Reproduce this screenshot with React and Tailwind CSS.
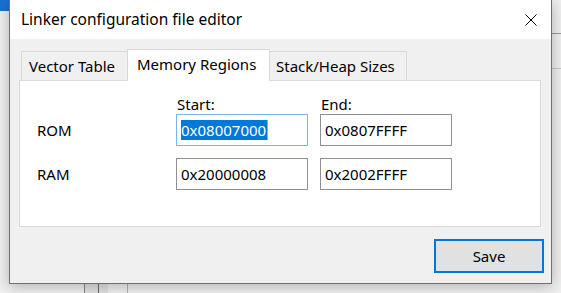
import React from "react";

const font = { fontFamily: '"Noto Sans", "Open Sans", sans-serif' };

function Field({ value, focused }) {
  return (
    <div
      className={
        "w-[132px] h-[32px] bg-white border flex items-center pl-[4px] text-[15px] text-black " +
        (focused ? "border-[#7ab4ea]" : "border-[#8f8f8f]")
      }
    >
      {focused ? (
        <span className="flex items-center">
          <span className="bg-[#0078d7] text-white leading-[20px] pr-[1px]">{value}</span>
          <span className="w-[1px] h-[20px] bg-[#f59a3a]" />
        </span>
      ) : (
        <span className="leading-[20px]">{value}</span>
      )}
    </div>
  );
}

export default function App() {
  return (
    <div className="relative w-[561px] h-[293px] overflow-hidden bg-[#f0f0f0] flex pl-[9px]" style={font}>
      {/* desktop behind the dialog */}
      <div className="absolute left-0 top-0 w-[9px] h-[11px] bg-[#1a73d1]" />
      <div className="absolute left-[552px] top-[33px] w-[9px] h-[1px] bg-[#9a9a9a]" />
      <div className="absolute left-[552px] top-[68px] w-[9px] h-[1px] bg-[#c8c8c8]" />
      <div className="absolute left-[84px] top-[283px] w-[24px] h-[10px] bg-[#e2e2e2]" />
      <div className="absolute left-[84px] top-[283px] w-[1px] h-[10px] bg-[#8a8a8a]" />
      <div className="absolute left-[98px] top-[283px] w-[1px] h-[10px] bg-[#6a6a6a]" />
      <div className="absolute left-[127px] top-[283px] w-[1px] h-[10px] bg-[#b4b4b4]" />

      {/* dialog window */}
      <div className="relative z-10 w-[543px] h-[284px] flex flex-col bg-[#f0f0f0] border-x border-b border-[#707070] shadow-[0_2px_14px_rgba(0,0,0,0.28)]">
        <div className="h-[39px] bg-white flex items-center justify-between pl-[11px] pr-[14px]">
          <span className="text-[15.5px] text-black">Linker configuration file editor</span>
          <svg width="12" height="12" viewBox="0 0 12 12" className="mt-[1px]">
            <path d="M0.5 0.5 L11.5 11.5 M11.5 0.5 L0.5 11.5" stroke="#000" strokeWidth="1" fill="none" />
          </svg>
        </div>

        <div className="flex-1 flex flex-col pt-[10px] pl-[9px] pr-[10px]">
          {/* tabs */}
          <div className="h-[31px] flex items-end pl-[2px] text-[15px] text-black">
            <div className="w-[106px] h-[29px] border border-b-0 border-r-0 border-[#d9d9d9] bg-[#f0f0f0] flex items-center pl-[7px]">
              Vector Table
            </div>
            <div className="relative z-10 w-[143px] h-[32px] mb-[-1px] border border-b-0 border-[#d9d9d9] bg-white flex items-center pl-[9px] pb-[3px]">
              Memory Regions
            </div>
            <div className="w-[137px] h-[29px] border border-b-0 border-l-0 border-[#d9d9d9] bg-[#f0f0f0] flex items-center pl-[6px]">
              Stack/Heap Sizes
            </div>
          </div>

          {/* panel */}
          <div className="w-[522px] h-[147px] bg-white border border-[#dadada] pl-[17px] pt-[14px] text-[15px] text-black">
            <div className="h-[19px] flex items-center leading-[19px]">
              <div className="w-[139px]" />
              <div className="w-[144px] pl-[1px]">Start:</div>
              <div className="pl-[1px]">End:</div>
            </div>
            <div className="h-[32px] flex items-center">
              <div className="w-[139px]">ROM</div>
              <div className="flex gap-[12px]">
                <Field value="0x08007000" focused />
                <Field value="0x0807FFFF" />
              </div>
            </div>
            <div className="h-[32px] mt-[12px] flex items-center">
              <div className="w-[139px]">RAM</div>
              <div className="flex gap-[12px]">
                <Field value="0x20000008" />
                <Field value="0x2002FFFF" />
              </div>
            </div>
          </div>

          {/* footer */}
          <div className="mt-[12px] flex justify-end mr-[-3px]">
            <button className="w-[110px] h-[34px] bg-[#e1e1e1] border-2 border-[#0078d7] text-[15px] text-black flex items-center justify-center">
              Save
            </button>
          </div>
        </div>
      </div>
    </div>
  );
}
